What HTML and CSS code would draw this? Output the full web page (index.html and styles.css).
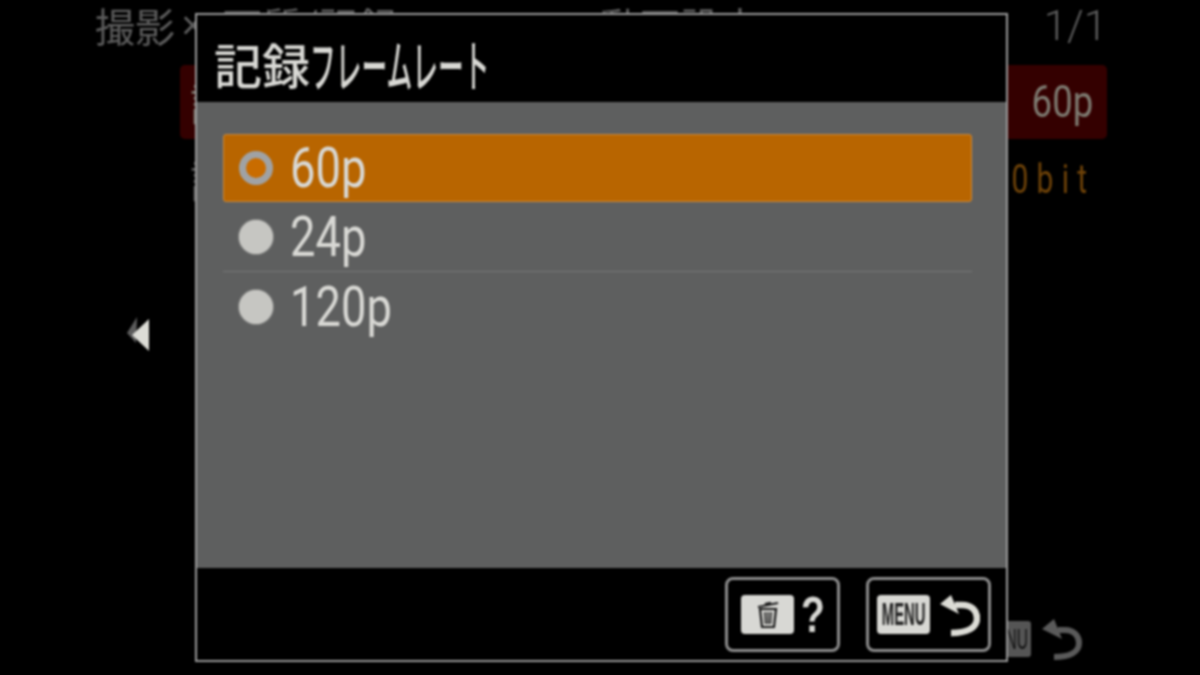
FILE: index.html
```html
<!DOCTYPE html>
<html lang="ja">
<head>
<meta charset="utf-8">
<title>記録フレームレート</title>
<link rel="stylesheet" href="styles.css">
</head>
<body>
<div class="screen">
  <div class="back">
    <div class="back-head">
      <span class="crumb">撮影</span><span class="crumb-x">×</span><span class="crumb crumb-b">画質/記録</span><span class="crumb crumb-c">動画設定</span><span class="page">1/1</span>
    </div>
    <div class="back-row back-row-on"><span class="back-name">記録フレームレート</span><span class="back-val"><span class="narrow">60p</span></span></div>
    <div class="back-row back-row-off"><span class="back-name back-name-off">記録設定</span><span class="back-val back-val-off"><span class="narrow narrow-sp">10bit</span></span></div>
    <div class="back-foot">
      <span class="back-menu"><span class="back-menu-t">MENU</span></span>
      <svg class="back-ret" viewBox="3 2 41 42"><path d="M3 13 L15 3 L23 23 Z" fill="#5a5a5a"/><path d="M19 14 H26 C35 14 40 20 40 27 C40 36 31 41 15 41" fill="none" stroke="#5a5a5a" stroke-width="6"/></svg>
    </div>
  </div>
  <svg class="arrow" viewBox="0 0 24 36"><path d="M11 1 L1 17 L10 27 Z" fill="#5c5c5c"/><path d="M23 3 L6 19 L23 35 Z" fill="#dcdcd6"/></svg>

  <div class="dialog">
    <div class="dlg-title"><span class="kanji">記録</span><span class="kana"><span class="kana-in">フレームレート</span></span></div>
    <div class="dlg-body">
      <div class="opt opt-on"><span class="radio radio-on"></span><span class="opt-text"><span class="num">60p</span></span></div>
      <div class="opt opt-line"><span class="radio"></span><span class="opt-text"><span class="num">24p</span></span></div>
      <div class="opt"><span class="radio"></span><span class="opt-text"><span class="num">120p</span></span></div>
    </div>
    <div class="dlg-foot">
      <div class="fbtn fbtn-a">
        <span class="key">
          <svg class="trash" viewBox="0 0 24 28"><path d="M2 6 L22 2" stroke="#1a1a1a" stroke-width="2" fill="none"/><path d="M9 3.5 L15 2.2" stroke="#1a1a1a" stroke-width="3" fill="none"/><path d="M4 8 H20 L18 26 H6 Z" fill="none" stroke="#1a1a1a" stroke-width="2.2"/><path d="M9 11 L9.6 23 M12 11 V23 M15 11 L14.4 23" stroke="#1a1a1a" stroke-width="1.6"/></svg>
        </span>
        <span class="help">?</span>
      </div>
      <div class="fbtn fbtn-b">
        <span class="key"><span class="menu-t">MENU</span></span>
        <svg class="ret" viewBox="0 2 44 44"><path d="M4 13 L15 4 L23 23 Z" fill="#dcdcd6"/><path d="M19 14 H26 C36 14 41 20 41 27 C41 37 31 42 15 42" fill="none" stroke="#dcdcd6" stroke-width="6.5"/></svg>
      </div>
    </div>
  </div>
</div>
</body>
</html>
```

FILE: styles.css
```css
* { box-sizing: border-box; }
html, body { margin: 0; padding: 0; background: #000; }
body { font-family: "Noto Sans CJK JP", "Liberation Sans", sans-serif; }
.screen { position: relative; width: 1200px; height: 675px; background: #000; overflow: hidden; filter: blur(0.8px); }

.back { width: 1200px; height: 675px; padding: 0 93px 0 180px; display: flex; flex-direction: column; }
.back-head { height: 65px; display: flex; align-items: center; color: #5c5c5c; font-size: 40px; margin-left: -85px; padding-bottom: 15px; }
.crumb-x { margin: 0 6px; font-family: "Liberation Sans", sans-serif; }
.crumb-b { margin-left: 12px; }
.crumb-c { margin-left: 202px; }
.page { margin-left: auto; font-family: "Roboto", sans-serif; font-weight: 300; font-size: 42px; display: inline-block; }
.back-row { display: flex; align-items: center; justify-content: space-between; padding: 0 14px 0 10px; font-size: 44px; }
.back-row-on { height: 74px; background: #340000; border-radius: 5px; color: #7d7a70; }
.back-row-off { height: 80px; color: #6e4208; }
.back-name-off { color: #5c5c5c; }
.back-val { font-family: "Roboto", sans-serif; font-weight: 400; display: inline-block; }
.back-val-off { font-size: 40px; }
.narrow { display: inline-block; transform: scaleX(0.83); transform-origin: right center; }
.narrow-sp { letter-spacing: 11px; margin-right: -2px; transform: scaleX(0.75); }
.back-foot { margin-top: auto; margin-bottom: 15px; display: flex; justify-content: flex-end; align-items: center; gap: 11px; }
.back-menu { width: 52px; height: 36px; background: #555; color: #111; border-radius: 3px; font-family: "Liberation Sans", sans-serif; font-size: 30px; text-align: center; line-height: 36px; }
.back-menu-t { display: inline-block; transform: scaleX(0.52); margin: 0 -30px; }
.back-ret { width: 41px; height: 42px; margin-right: 24px; }
.arrow { position: absolute; left: 126px; top: 316px; width: 24px; height: 36px; }

.dialog { position: absolute; left: 195px; top: 13px; width: 813px; height: 649px; border: 2px solid #9a9a9a; background: #000; display: flex; flex-direction: column; }
.dlg-title { height: 87px; flex: none; display: flex; align-items: center; padding: 8px 0 0 17px; color: #d8d8d4; }
.kanji { font-size: 48px; line-height: 1; font-weight: 500; }
.kana { display: inline-block; width: 180px; line-height: 1; }
.kana-in { display: inline-block; font-size: 56px; font-weight: 500; white-space: nowrap; transform: scaleX(0.46); transform-origin: left center; }
.dlg-body { flex: 1; background: #5e5f5f; padding: 32px 34px 0 26px; }
.opt { height: 69px; display: flex; align-items: center; padding-left: 16px; color: #d8d8d4; }
.opt-on { height: 68px; background: #b86500; border: 1px solid #cc8a3a; border-radius: 3px; margin-bottom: 1px; padding-left: 15px; }
.opt-line { border-bottom: 1px solid #757676; }
.radio { width: 34px; height: 34px; border-radius: 50%; background: #c6c6c2; flex: none; box-shadow: 0 0 2px #c6c6c2; }
.radio-on { background: #c96c00; border: 7px solid #a0a2a4; box-shadow: none; }
.opt-text { margin-left: 17px; }
.num { display: inline-block; font-family: "Roboto", sans-serif; font-size: 56px; line-height: 1; font-weight: 400; transform: scaleX(0.81); transform-origin: left center; }
.dlg-foot { height: 92px; flex: none; display: flex; justify-content: flex-end; align-items: flex-start; gap: 26px; padding: 9px 15px 0 0; }
.fbtn { height: 75px; border: 3px solid #8c8c8c; border-radius: 8px; display: flex; align-items: center; }
.fbtn-a { width: 115px; padding-left: 13px; gap: 7px; }
.fbtn-b { width: 125px; padding-left: 8px; gap: 6px; }
.key { width: 53px; height: 39px; background: #d8d8d4; border-radius: 4px; display: flex; align-items: center; justify-content: center; }
.trash { width: 24px; height: 28px; }
.help { display: inline-block; font-family: "Liberation Sans", sans-serif; font-weight: 700; color: #d8d8d4; font-size: 50px; line-height: 1; transform: scaleX(0.78); transform-origin: left center; }
.menu-t { display: inline-block; font-family: "Liberation Sans", sans-serif; font-weight: 700; font-size: 31px; color: #222; transform: scaleX(0.48); margin: 0 -30px; white-space: nowrap; }
.ret { width: 44px; height: 44px; }
```
